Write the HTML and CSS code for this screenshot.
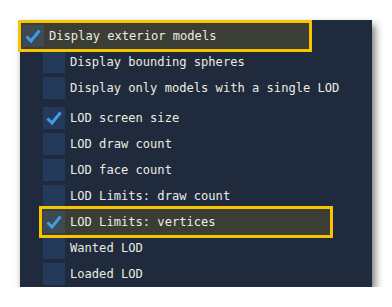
FILE: index.html
```html
<!DOCTYPE html>
<html lang="en">
<head>
    <meta charset="UTF-8">
    <link rel="stylesheet" href="styles.css">
    <title>Debug Options</title>
</head>
<body>

<div class="panel">
    <div class="row focused">
        <span class="box checked"><svg viewBox="0 0 22 22"><path d="M4.5 11.5 L9 16 L17.5 5.5"/></svg></span>
        <span class="label">Display exterior models</span>
    </div>
    <div class="row sub">
        <span class="box"></span>
        <span class="label">Display bounding spheres</span>
    </div>
    <div class="row sub">
        <span class="box"></span>
        <span class="label">Display only models with a single LOD</span>
    </div>

    <div class="group">
        <div class="row sub">
            <span class="box checked"><svg viewBox="0 0 22 22"><path d="M4.5 11.5 L9 16 L17.5 5.5"/></svg></span>
            <span class="label">LOD screen size</span>
        </div>
        <div class="row sub">
            <span class="box"></span>
            <span class="label">LOD draw count</span>
        </div>
        <div class="row sub">
            <span class="box"></span>
            <span class="label">LOD face count</span>
        </div>
        <div class="row sub">
            <span class="box"></span>
            <span class="label">LOD Limits: draw count</span>
        </div>
        <div class="row sub focused">
            <span class="box checked"><svg viewBox="0 0 22 22"><path d="M4.5 11.5 L9 16 L17.5 5.5"/></svg></span>
            <span class="label">LOD Limits: vertices</span>
        </div>
        <div class="row sub">
            <span class="box"></span>
            <span class="label">Wanted LOD</span>
        </div>
        <div class="row sub">
            <span class="box"></span>
            <span class="label">Loaded LOD</span>
        </div>
    </div>
</div>

</body>
</html>
```

FILE: styles.css
```css
body {
    margin: 0;
    background: #fff;
    font-family: "DejaVu Sans Mono", monospace;
}

.panel {
    margin: 20px 0 0 20px;
    width: 352px;
    height: 267px;
    box-sizing: border-box;
    padding-top: 3px;
    background: #1f2a3c;
    box-shadow: 3px 5px 8px rgba(0, 0, 0, 0.55);
}

.group {
    margin-top: 4px;
}

.row {
    display: flex;
    align-items: center;
    gap: 5px;
    width: 288px;
    height: 26px;
    margin-left: 1px;
    padding-left: 1px;
    box-sizing: border-box;
    color: #ecece3;
    font-size: 12.1px;
}

.row.sub {
    margin-left: 22px;
}

.row.focused {
    background: #3a3e34;
    outline: 3px solid #f7c400;
}

.box {
    width: 22px;
    height: 22px;
    flex: none;
    background: #243a5b;
}

.focused .box {
    background: #3d4a54;
}

.box svg {
    display: block;
    width: 22px;
    height: 22px;
    fill: none;
    stroke: #3f9ce9;
    stroke-width: 3;
}

.label {
    white-space: nowrap;
}
```
